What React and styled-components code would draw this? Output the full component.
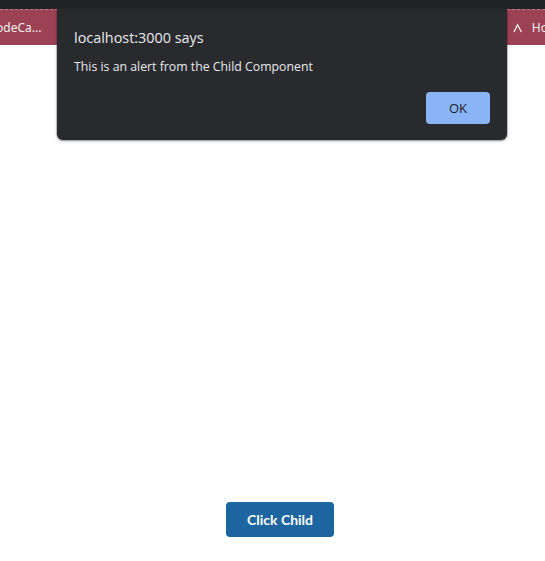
import React from "react";
import styled, { createGlobalStyle } from "styled-components";

const Global = createGlobalStyle`
  html, body { margin: 0; padding: 0; background: #ffffff; }
  body { width: 545px; height: 561px; overflow: hidden; font-family: "Open Sans", "Noto Sans", sans-serif; }
`;

const Screen = styled.div`
  position: relative;
  width: 545px;
  height: 561px;
  display: flex;
  flex-direction: column;
`;

const TabStrip = styled.div`
  height: 9px;
  background: #202124;
`;

const BookmarkBar = styled.div`
  height: 36px;
  background: #9c4254;
  border-top: 1px dashed #c2788a;
  box-sizing: border-box;
  display: flex;
  align-items: center;
  justify-content: space-between;
  color: #f1f1f1;
  font-family: "Noto Sans", "Open Sans", sans-serif;
  font-size: 12px;
  overflow: hidden;
`;

const Bookmark = styled.span`
  display: flex;
  align-items: center;
  gap: 9px;
  white-space: nowrap;
  margin-left: ${(p) => p.$offset || 0}px;
  margin-right: ${(p) => p.$right || 0}px;
`;

const Page = styled.main`
  flex: 1;
  display: flex;
  flex-direction: column;
  align-items: center;
  padding-top: 457px;
  padding-left: 15px;
`;

const ChildButton = styled.button`
  width: 108px;
  height: 35px;
  background: #1d65a0;
  color: #ffffff;
  border: none;
  border-radius: 4px;
  font-family: Lato, sans-serif;
  font-weight: 700;
  font-size: 14px;
  cursor: pointer;
`;

const Dialog = styled.div`
  position: absolute;
  left: 57px;
  top: 9px;
  width: 450px;
  height: 131px;
  box-sizing: border-box;
  background: #292a2d;
  border-radius: 0 0 6px 6px;
  box-shadow: 0 1px 3px rgba(0, 0, 0, 0.35), 0 0 0 1px rgba(60, 60, 60, 0.2);
  padding: 18px 17px 16px 17px;
  display: flex;
  flex-direction: column;
  font-family: "Open Sans", "Noto Sans", sans-serif;
  color: #e8eaed;
`;

const Title = styled.div`
  font-size: 14.4px;
  line-height: 22px;
`;

const Message = styled.div`
  font-size: 12.3px;
  line-height: 18px;
  margin-top: 9px;
`;

const Actions = styled.div`
  margin-top: auto;
  display: flex;
  justify-content: flex-end;
`;

const OkButton = styled.button`
  width: 64px;
  height: 32px;
  background: #8ab4f8;
  color: #202124;
  border: none;
  border-radius: 4px;
  font-family: "Open Sans", "Noto Sans", sans-serif;
  font-size: 13px;
`;

const Caret = () => (
  <svg width="10" height="10" viewBox="0 0 10 10" fill="none" stroke="#f1f1f1" strokeWidth="1.3">
    <path d="M1 9 L4.5 2 L8.5 9" />
  </svg>
);

export default function App() {
  return (
    <>
      <Global />
      <Screen>
        <TabStrip />
        <BookmarkBar>
          <Bookmark $offset={-4}>odeCa...</Bookmark>
          <Bookmark $right={-3}>
            <Caret />
            Ho
          </Bookmark>
        </BookmarkBar>
        <Page>
          <ChildButton onClick={() => alert("This is an alert from the Child Component")}>
            Click Child
          </ChildButton>
        </Page>
        <Dialog role="alertdialog">
          <Title>localhost:3000 says</Title>
          <Message>This is an alert from the Child Component</Message>
          <Actions>
            <OkButton>OK</OkButton>
          </Actions>
        </Dialog>
      </Screen>
    </>
  );
}
